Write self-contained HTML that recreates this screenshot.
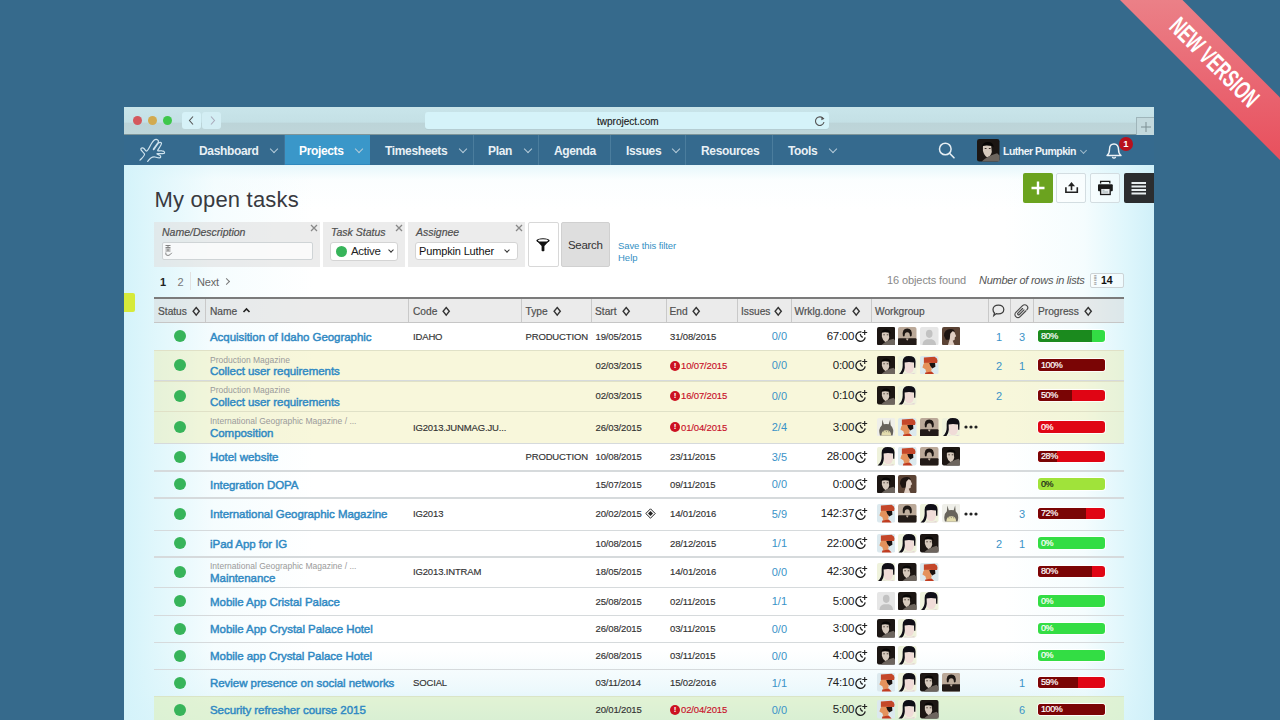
<!DOCTYPE html>
<html><head><meta charset="utf-8">
<style>
*{margin:0;padding:0;box-sizing:border-box}
html,body{width:1280px;height:720px;overflow:hidden}
body{background:#366a8c;font-family:"Liberation Sans",sans-serif;position:relative}
.a{position:absolute;white-space:nowrap}
.tl{width:9px;height:9px;border-radius:50%;top:116px}
.ni{color:#e8f0f5;font-weight:bold;font-size:12px;top:144px;line-height:14px;letter-spacing:-0.35px}
.sep{top:135px;width:1px;height:30px;background:#4b7d9d}
.chev{width:6px;height:6px;border-right:1.4px solid #b5cbd9;border-bottom:1.4px solid #b5cbd9;transform:rotate(45deg)}
.hd{font-size:10.2px;color:#505050;top:305.5px;line-height:12px;-webkit-text-stroke:0.2px #505050}
.hs{top:299px;width:1px;height:23px;background:#c9c9c9}
.sort{width:7px;height:10px}
.lnk{color:#2f89c3;font-size:11.5px;letter-spacing:-0.05px;line-height:13px;-webkit-text-stroke:0.45px #2f89c3}
.par{color:#9a9a9a;font-size:8.5px;line-height:10px}
.tx{color:#333;font-size:9.5px;line-height:11px;letter-spacing:-0.15px;-webkit-text-stroke-width:0.15px}
.num{color:#3a93c8;font-size:11px;line-height:12px}
.wk{color:#222;font-size:11.5px;line-height:13px;letter-spacing:-0.3px}
.dot{width:12px;height:12px;border-radius:50%;background:#37b45a;left:174px}
.bar{left:1038px;width:67px;height:11.5px;border-radius:3px;overflow:hidden;box-shadow:0 0 0 1px rgba(255,255,255,.85)}
.bar span{position:absolute;left:3px;top:0.5px;line-height:11px;font-size:9px;color:#fff;letter-spacing:-0.4px;-webkit-text-stroke:0.2px #fff}
.rb{left:154px;width:970px;height:1.5px;background:#d6dadc}
</style></head><body>

<div class="a" style="left:124px;top:107px;width:1030px;height:28px;background:linear-gradient(#c9e5ea 0,#c4e0e5 55%,#bcd4d8 56%,#bfd6da 100%)"></div>
<div class="a" style="left:124px;top:134px;width:1030px;height:1px;background:#7e9599"></div>
<div class="a tl" style="left:133px;background:#d4585d"></div>
<div class="a tl" style="left:148px;background:#d2aa4e"></div>
<div class="a tl" style="left:163px;background:#3ec74b"></div>
<div class="a" style="left:182px;top:112px;width:19px;height:17px;border-radius:3px;background:#d6f2f8"></div>
<div class="a" style="left:202px;top:112px;width:19px;height:17px;border-radius:3px;background:#d3eef4"></div>
<svg class="a" style="left:182px;top:112px" width="40" height="17"><path d="M11 4.5 L7.5 8.5 L11 12.5" stroke="#555" stroke-width="1.1" fill="none"/><path d="M29 4.5 L32.5 8.5 L29 12.5" stroke="#aab" stroke-width="1.1" fill="none"/></svg>
<div class="a" style="left:425px;top:112px;width:404px;height:17px;border-radius:3px;background:#d5f3f9;box-shadow:0 1px 0 #b5cdd2"></div>
<div class="a" style="left:597px;top:115.5px;font-size:10px;line-height:12px;color:#222;-webkit-text-stroke:0.15px #222">twproject.com</div>
<svg class="a" style="left:813px;top:114px" width="14" height="14"><path d="M10.5 5 A4.3 4.3 0 1 0 11 8" stroke="#555" stroke-width="1.1" fill="none"/><path d="M8.5 2.5 L11.5 4.8 L8.3 6.2Z" fill="#555"/></svg>
<div class="a" style="left:1136px;top:117px;width:18px;height:18px;background:#c3d9dd;border-left:1px solid #9fb5ba;border-top:1px solid #9fb5ba"></div>
<svg class="a" style="left:1139px;top:120px" width="14" height="14"><path d="M7 2 V12 M2 7 H12" stroke="#7d8f93" stroke-width="1"/></svg>
<div class="a" style="left:124px;top:135px;width:1030px;height:30px;background:#356a8e"></div>
<div class="a" style="left:284px;top:135px;width:86px;height:30px;background:#3a97c9;border-bottom:1px solid #2f88bd"></div>
<svg class="a" style="left:136px;top:136px" width="34" height="29" viewBox="0 0 34 29"><path d="M4 24.2 C6 22 9 19.5 8.5 18 C8 16.5 4.5 14.5 4.8 13 C5.2 11.5 7 11.5 8 12.5 C9 13.5 9.5 15.5 10.8 15 C12.5 14 14 10 15.5 7.5 C17 5 19.5 3 21 3.6 C22.5 4.2 22.8 5 22 6.5 L17.5 12.8 C17 14 18 14 19 12 L22.5 7 C23.5 6 25.5 6 25.5 7.5 C25.5 9 23 12 21.8 14 C21 15.5 24 14.5 26 14.8 C28 15 28.8 16 28.5 17 C28.2 18 24 17.5 21.5 17.5 C20 17.7 21.5 18.5 23 19 C24.5 19.5 25 20.5 24.5 21.5 C24 22.5 21 21.5 19 21 C16.5 20.5 14 22 11.7 25.4" stroke="#cfe3ee" stroke-width="1.2" fill="none" stroke-linecap="round" stroke-linejoin="round"/></svg>
<div class="a ni" style="left:199px;">Dashboard</div>
<div class="a chev" style="left:271px;top:146px"></div>
<div class="a ni" style="left:299px;color:#fff">Projects</div>
<div class="a chev" style="left:356px;top:146px"></div>
<div class="a ni" style="left:385px;">Timesheets</div>
<div class="a chev" style="left:460px;top:146px"></div>
<div class="a sep" style="left:473px"></div>
<div class="a ni" style="left:488px;">Plan</div>
<div class="a chev" style="left:525px;top:146px"></div>
<div class="a sep" style="left:538px"></div>
<div class="a ni" style="left:554px;">Agenda</div>
<div class="a sep" style="left:610px"></div>
<div class="a ni" style="left:626px;">Issues</div>
<div class="a chev" style="left:673px;top:146px"></div>
<div class="a sep" style="left:685px"></div>
<div class="a ni" style="left:701px;">Resources</div>
<div class="a sep" style="left:772px"></div>
<div class="a ni" style="left:788px;">Tools</div>
<div class="a chev" style="left:830px;top:146px"></div>
<div class="a sep" style="left:284px;background:#41759a"></div>
<svg class="a" style="left:937px;top:141px" width="20" height="20"><circle cx="8.3" cy="8" r="5.8" stroke="#e6eef3" stroke-width="1.5" fill="none"/><path d="M12.5 12.2 L17 16.8" stroke="#e6eef3" stroke-width="1.6" stroke-linecap="round"/></svg>
<svg class="a" style="left:977px;top:139px" width="22.5" height="22.5" viewBox="0 0 19 19"><rect width="19" height="19" rx="2" fill="#1c1613"/><path d="M4 7 Q5 2 10 2.5 Q14 3 14 7 L13 6 Q9 4.5 5.5 6Z" fill="#080605"/><path d="M5 6 Q8 4.8 12 6 L12.5 11 Q11.5 15 8.5 15.5 Q6 14 5 10Z" fill="#d6c9bc"/><path d="M6.5 8 L8 8 M10 8 L11.5 8" stroke="#3a2e28" stroke-width="0.9"/><path d="M4 19 Q9 14 17 12 L19 14 L19 19Z" fill="#6d655e"/></svg>
<div class="a" style="left:1003px;top:145px;font-size:11px;line-height:13px;font-weight:bold;color:#eef4f8;letter-spacing:-0.5px;font-size:10.5px">Luther Pumpkin</div>
<div class="a chev" style="left:1081px;top:148px;width:5px;height:5px;border-color:#9fb9ca;border-width:0 1.2px 1.2px 0"></div>
<svg class="a" style="left:1104px;top:141px" width="20" height="19"><path d="M3 14.5 Q5.5 12.5 5.5 8.5 Q5.5 3 10 3 Q14.5 3 14.5 8.5 Q14.5 12.5 17 14.5 Z" stroke="#eef4f8" stroke-width="1.4" fill="none" stroke-linejoin="round"/><path d="M8.3 16 Q10 18.3 11.7 16" stroke="#eef4f8" stroke-width="1.3" fill="none"/></svg>
<div class="a" style="left:1119px;top:137px;width:14px;height:14px;border-radius:50%;background:#b8101c;color:#fff;font-size:9.5px;font-weight:bold;text-align:center;line-height:14px">1</div>
<div class="a" style="left:124px;top:165px;width:1030px;height:555px;background:
 linear-gradient(90deg,rgba(212,243,250,1) 0,rgba(218,245,251,.85) 30px,rgba(235,250,253,.5) 90px,rgba(255,255,255,0) 190px),
 linear-gradient(270deg,rgba(208,240,249,1) 0,rgba(218,245,251,.85) 30px,rgba(235,250,253,.5) 70px,rgba(255,255,255,0) 150px),
 linear-gradient(180deg,rgba(210,240,248,.55) 0,rgba(240,251,253,.25) 15px,rgba(255,255,255,0) 45px),
 linear-gradient(0deg,rgba(205,238,248,.9) 0,rgba(225,245,250,.6) 30px,rgba(255,255,255,0) 70px),#fff"></div>
<div class="a" style="left:1023px;top:173px;width:30px;height:30px;border-radius:2px;background:#6ba31f"></div>
<svg class="a" style="left:1023px;top:173px" width="30" height="30"><path d="M15 8.5 V21.5 M8.5 15 H21.5" stroke="#fff" stroke-width="2.4"/></svg>
<div class="a" style="left:1056px;top:173px;width:30px;height:30px;border-radius:2px;background:rgba(255,255,255,.45);border:1px solid #d3dde1"></div>
<div class="a" style="left:1090px;top:173px;width:30px;height:30px;border-radius:2px;background:rgba(255,255,255,.45);border:1px solid #d3dde1"></div>
<svg class="a" style="left:1056px;top:173px" width="30" height="30"><path d="M15.5 9 L19 13.2 H12 Z" fill="#222"/><path d="M15.5 12.5 V17.2" stroke="#222" stroke-width="1.6"/><path d="M9.9 14.2 V19.2 H21.3 V14.2" stroke="#222" stroke-width="1.6" fill="none"/></svg>
<svg class="a" style="left:1090px;top:173px" width="30" height="30"><path d="M10.6 10.5 V8.4 H19.8 V10.5" stroke="#1a1a1a" stroke-width="1.3" fill="none"/><rect x="8" y="11.2" width="14.8" height="7" rx="1" fill="#1a1a1a"/><rect x="10.6" y="15.3" width="9.6" height="6.2" fill="#e8ecee" stroke="#1a1a1a" stroke-width="1.3"/><path d="M12.5 17.2 H14.5 M12.5 19 H18" stroke="#9aa" stroke-width="0.9"/></svg>
<div class="a" style="left:1124px;top:173px;width:30px;height:30px;border-radius:2px 0 0 2px;background:#2b2d2f"></div>
<svg class="a" style="left:1124px;top:173px" width="30" height="30"><path d="M7.5 10 H22 M7.5 13.5 H22 M7.5 17 H22 M7.5 20.5 H22" stroke="#e8eef0" stroke-width="2"/></svg>
<div class="a" style="left:154.5px;top:187px;font-size:22px;line-height:26px;color:#383a40;letter-spacing:0.2px">My open tasks</div>
<div class="a" style="left:154px;top:222px;width:166px;height:45px;background:rgba(225,225,225,.62)"></div>
<div class="a" style="left:162px;top:226px;font-size:10.5px;line-height:12px;font-style:italic;color:#505050;-webkit-text-stroke:0.2px #505050">Name/Description</div>
<svg class="a" style="left:309.5px;top:224px" width="8" height="8"><path d="M1 1 L7 7 M7 1 L1 7" stroke="#888" stroke-width="1.3"/></svg>
<div class="a" style="left:323px;top:222px;width:82px;height:45px;background:rgba(225,225,225,.62)"></div>
<div class="a" style="left:331px;top:226px;font-size:10.5px;line-height:12px;font-style:italic;color:#505050;-webkit-text-stroke:0.2px #505050">Task Status</div>
<svg class="a" style="left:394.5px;top:224px" width="8" height="8"><path d="M1 1 L7 7 M7 1 L1 7" stroke="#888" stroke-width="1.3"/></svg>
<div class="a" style="left:408px;top:222px;width:117px;height:45px;background:rgba(225,225,225,.62)"></div>
<div class="a" style="left:416px;top:226px;font-size:10.5px;line-height:12px;font-style:italic;color:#505050;-webkit-text-stroke:0.2px #505050">Assignee</div>
<svg class="a" style="left:514.5px;top:224px" width="8" height="8"><path d="M1 1 L7 7 M7 1 L1 7" stroke="#888" stroke-width="1.3"/></svg>
<div class="a" style="left:162px;top:241.5px;width:151px;height:18px;border-radius:2px;background:rgba(255,255,255,.72);border:1px solid #cfd4d6"></div>
<svg class="a" style="left:164px;top:244px" width="10" height="13"><path d="M1.5 1.5 H6.5 M4 1.5 V3.5 M1.5 3.5 H6.5 M1.5 5 H6.5 M4 5 V7 M1.5 7 H6.5 M1.8 8.5 Q1 11.5 4 11.5 Q6 11.5 7.8 8.8" stroke="#777" stroke-width="0.9" fill="none"/></svg>
<div class="a" style="left:330px;top:241.5px;width:68px;height:19px;border-radius:3px;background:#fff;border:1px solid #d4d4d4"></div>
<div class="a" style="left:336px;top:246px;width:11px;height:11px;border-radius:50%;background:#37b45a"></div>
<div class="a" style="left:351px;top:245px;font-size:11.5px;line-height:13px;color:#222;letter-spacing:-0.3px">Active</div>
<div class="a chev" style="left:389px;top:248px;width:4px;height:4px;border-color:#333;border-width:0 1.1px 1.1px 0"></div>
<div class="a" style="left:415px;top:241.5px;width:103px;height:18.5px;border-radius:3px;background:#fff;border:1px solid #d4d4d4"></div>
<div class="a" style="left:419px;top:244.5px;font-size:11px;line-height:13px;color:#111;letter-spacing:-0.15px">Pumpkin Luther</div>
<div class="a chev" style="left:505px;top:248px;width:4px;height:4px;border-color:#333;border-width:0 1.1px 1.1px 0"></div>
<div class="a" style="left:527.5px;top:222px;width:31px;height:45px;border-radius:2px;background:#fff;border:1px solid #d8d8d8"></div>
<svg class="a" style="left:535px;top:237px" width="16" height="16"><ellipse cx="8" cy="3.6" rx="6.6" ry="2.3" fill="#111"/><path d="M1.5 3.6 L6.6 9 V13.8 Q8 14.8 9.4 13.8 V9 L14.5 3.6Z" fill="#111"/><ellipse cx="8" cy="3.4" rx="5" ry="1.2" fill="#fff"/></svg>
<div class="a" style="left:561px;top:222px;width:49px;height:45px;border-radius:2px;background:#dedede;border:1px solid #d0d0d0"></div>
<div class="a" style="left:568px;top:239px;font-size:11.5px;line-height:13px;color:#333;letter-spacing:-0.3px">Search</div>
<div class="a" style="left:618px;top:240px;font-size:9.5px;line-height:11px;color:#3490c4;letter-spacing:-0.1px">Save this filter</div>
<div class="a" style="left:618px;top:252px;font-size:9.5px;line-height:11px;color:#3490c4">Help</div>
<div class="a" style="left:160px;top:276px;font-size:11px;line-height:12px;font-weight:bold;color:#222">1</div>
<div class="a" style="left:177.5px;top:276px;font-size:11px;line-height:12px;color:#777">2</div>
<div class="a" style="left:190px;top:272px;width:1px;height:18px;background:#e2e2e2"></div>
<div class="a" style="left:197px;top:276px;font-size:11px;line-height:12px;color:#666;letter-spacing:-0.2px">Next</div>
<div class="a chev" style="left:224px;top:279px;width:5px;height:5px;border-color:#777;border-style:solid;border-width:1.2px 1.2px 0 0"></div>
<div class="a" style="left:124px;top:293px;width:11px;height:19px;border-radius:0 2px 2px 0;background:#d6ea3a"></div>
<div class="a" style="left:887px;top:274px;font-size:11px;line-height:13px;color:#888;letter-spacing:-0.1px">16 objects found</div>
<div class="a" style="left:979px;top:274px;font-size:11px;line-height:13px;color:#555;font-style:italic;letter-spacing:-0.25px">Number of rows in lists</div>
<div class="a" style="left:1089.5px;top:272.5px;width:34px;height:15px;border-radius:2px;background:rgba(255,255,255,.5);border:1px solid #ccd3d6"></div>
<div class="a" style="left:1094px;top:274.5px;font-size:5px;line-height:3.5px;color:#777;width:4px">&#8801;<br>&#8801;<br>&#8801;</div>
<div class="a" style="left:1101px;top:274px;font-size:10.5px;line-height:12px;font-weight:bold;color:#111">14</div>
<div class="a" style="left:154px;top:297px;width:970px;height:2px;background:#7b7b7b"></div>
<div class="a" style="left:154px;top:299px;width:970px;height:23px;background:rgba(215,215,215,.5)"></div>
<div class="a" style="left:154px;top:321.5px;width:970px;height:1.2px;background:#c6c6c6"></div>
<div class="a hs" style="left:205px"></div>
<div class="a hs" style="left:408px"></div>
<div class="a hs" style="left:521px"></div>
<div class="a hs" style="left:591px"></div>
<div class="a hs" style="left:665.5px"></div>
<div class="a hs" style="left:737px"></div>
<div class="a hs" style="left:790.5px"></div>
<div class="a hs" style="left:871px"></div>
<div class="a hs" style="left:988px"></div>
<div class="a hs" style="left:1010px"></div>
<div class="a hs" style="left:1033px"></div>
<div class="a hd" style="left:158px">Status</div>
<svg class="a" style="left:191.5px;top:305.7px" width="9" height="11"><path d="M4.2 1.5 L7.3 5.3 L4.2 9.1 L1.1 5.3Z" stroke="#333" stroke-width="1.4" fill="none" stroke-linejoin="miter"/></svg>
<div class="a hd" style="left:210px">Name</div>
<div class="a hd" style="left:413px">Code</div>
<svg class="a" style="left:441.5px;top:305.7px" width="9" height="11"><path d="M4.2 1.5 L7.3 5.3 L4.2 9.1 L1.1 5.3Z" stroke="#333" stroke-width="1.4" fill="none" stroke-linejoin="miter"/></svg>
<div class="a hd" style="left:525.5px">Type</div>
<svg class="a" style="left:552.5px;top:305.7px" width="9" height="11"><path d="M4.2 1.5 L7.3 5.3 L4.2 9.1 L1.1 5.3Z" stroke="#333" stroke-width="1.4" fill="none" stroke-linejoin="miter"/></svg>
<div class="a hd" style="left:595px">Start</div>
<svg class="a" style="left:622px;top:305.7px" width="9" height="11"><path d="M4.2 1.5 L7.3 5.3 L4.2 9.1 L1.1 5.3Z" stroke="#333" stroke-width="1.4" fill="none" stroke-linejoin="miter"/></svg>
<div class="a hd" style="left:669.5px">End</div>
<svg class="a" style="left:692px;top:305.7px" width="9" height="11"><path d="M4.2 1.5 L7.3 5.3 L4.2 9.1 L1.1 5.3Z" stroke="#333" stroke-width="1.4" fill="none" stroke-linejoin="miter"/></svg>
<div class="a hd" style="left:741px">Issues</div>
<svg class="a" style="left:774px;top:305.7px" width="9" height="11"><path d="M4.2 1.5 L7.3 5.3 L4.2 9.1 L1.1 5.3Z" stroke="#333" stroke-width="1.4" fill="none" stroke-linejoin="miter"/></svg>
<div class="a hd" style="left:794.5px">Wrklg.done</div>
<svg class="a" style="left:852px;top:305.7px" width="9" height="11"><path d="M4.2 1.5 L7.3 5.3 L4.2 9.1 L1.1 5.3Z" stroke="#333" stroke-width="1.4" fill="none" stroke-linejoin="miter"/></svg>
<div class="a hd" style="left:875px">Workgroup</div>
<div class="a hd" style="left:1038px">Progress</div>
<svg class="a" style="left:1083.5px;top:305.7px" width="9" height="11"><path d="M4.2 1.5 L7.3 5.3 L4.2 9.1 L1.1 5.3Z" stroke="#333" stroke-width="1.4" fill="none" stroke-linejoin="miter"/></svg>
<svg class="a" style="left:242px;top:306px" width="9" height="8"><path d="M1.5 6 L4.5 3 L7.5 6" stroke="#222" stroke-width="1.6" fill="none"/></svg>
<svg class="a" style="left:988px;top:300px" width="22" height="22"><path d="M10.4 5.1 C13.5 5.1 15.8 6.9 15.8 9.5 C15.8 12.1 13.5 13.9 10.4 13.9 C9.6 13.9 8.9 13.8 8.3 13.6 L5.8 15.6 L6.5 12.9 C5.5 12.1 5 10.9 5 9.5 C5 6.9 7.3 5.1 10.4 5.1Z" stroke="#3d3d3d" stroke-width="1.25" fill="none"/></svg>
<svg class="a" style="left:1011px;top:300px" width="22" height="22"><g transform="rotate(45 10.5 11)"><path d="M13.5 8 L13.5 16 A3 3 0 0 1 7.5 16 L7.5 6.5 A3 3 0 0 1 13.5 6.5 M11.5 8.5 L11.5 15 A1 1 0 0 1 9.5 15 L9.5 8.5" stroke="#4a4a4a" stroke-width="1.2" fill="none" stroke-linecap="round"/></g></svg>
<div class="a dot" style="top:330.0px"></div>
<div class="a lnk" style="left:210px;top:330.6px">Acquisition of Idaho Geographic</div>
<div class="a tx" style="left:413px;top:330.5px">IDAHO</div>
<div class="a tx" style="left:525.5px;top:330.5px">PRODUCTION</div>
<div class="a tx" style="left:595.5px;top:330.5px">19/05/2015</div>
<div class="a tx" style="left:670px;top:330.5px">31/08/2015</div>
<div class="a num" style="right:493px;top:330.0px">0/0</div>
<div class="a wk" style="right:426px;top:329.5px">67:00</div>
<svg class="a" style="left:854px;top:328.0px" width="16" height="16"><path d="M7.4 4 A4.7 4.7 0 1 0 11.2 9.4" stroke="#222" stroke-width="1.3" fill="none"/><path d="M6.2 6 Q6.8 8.6 8.8 9.4" stroke="#222" stroke-width="1.2" fill="none"/><path d="M10.7 2 V7 M8.2 4.5 H13.2" stroke="#222" stroke-width="1.1"/></svg>
<svg class="a" style="left:876.5px;top:326.7px" width="18.5" height="18.5" viewBox="0 0 19 19"><rect width="19" height="19" rx="2" fill="#1c1613"/><path d="M4 7 Q5 2 10 2.5 Q14 3 14 7 L13 6 Q9 4.5 5.5 6Z" fill="#080605"/><path d="M5 6 Q8 4.8 12 6 L12.5 11 Q11.5 15 8.5 15.5 Q6 14 5 10Z" fill="#d6c9bc"/><path d="M6.5 8 L8 8 M10 8 L11.5 8" stroke="#3a2e28" stroke-width="0.9"/><path d="M4 19 Q9 14 17 12 L19 14 L19 19Z" fill="#6d655e"/></svg>
<svg class="a" style="left:898.3px;top:326.7px" width="18.5" height="18.5" viewBox="0 0 19 19"><rect width="19" height="19" rx="2" fill="#bba999"/><rect y="11.5" width="19" height="7.5" rx="1" fill="#221a17"/><path d="M5 9 Q4 1.5 9.5 1.5 Q15 1.5 14 9 Q13 10.5 12 9 L7 9 Q6 10.5 5 9Z" fill="#1e1714"/><ellipse cx="9.5" cy="8.6" rx="2.6" ry="3.2" fill="#bfae9e"/><path d="M8 12 L9.5 14 L11 12Z" fill="#c4b2a2"/></svg>
<svg class="a" style="left:920.0999999999999px;top:326.7px" width="18.5" height="18.5" viewBox="0 0 19 19"><rect width="19" height="19" rx="2" fill="#e6e6e6"/><ellipse cx="9.5" cy="7" rx="3.4" ry="4.2" fill="#c2c2c2"/><path d="M2.5 19 Q2.5 13.5 7 12.5 L12 12.5 Q16.5 13.5 16.5 19Z" fill="#c2c2c2"/></svg>
<svg class="a" style="left:941.8999999999999px;top:326.7px" width="18.5" height="18.5" viewBox="0 0 19 19"><rect width="19" height="19" rx="2" fill="#5b4335"/><path d="M2 9 Q2 2 9 2 Q13 2 13 5 L9 7 L8 13 L4 13Z" fill="#1d1411"/><path d="M10.5 4.5 Q13 4 13.5 7 L14.5 9.5 L13.2 10.5 L13 13 L11 14 L13 19 L6 19 L8 12 L8.5 7Z" fill="#e0cfc4"/></svg>
<div class="a num" style="left:996px;top:330.6px">1</div>
<div class="a num" style="left:1019px;top:330.6px">3</div>
<div class="a bar" style="top:330.0px;background:#33dd44"><div class="a" style="left:0;top:0;height:11.5px;width:80%;background:#1b8a1e"></div><span>80%</span></div>
<div class="a rb" style="top:349.5px"></div>
<div class="a" style="left:154px;top:350px;width:970px;height:30.5px;background:rgba(238,236,170,.42)"></div>
<div class="a dot" style="top:359.2px"></div>
<div class="a par" style="left:210px;top:354.6px">Production Magazine</div>
<div class="a lnk" style="left:210px;top:365.1px">Collect user requirements</div>
<div class="a tx" style="left:595.5px;top:359.8px">02/03/2015</div>
<div class="a" style="left:670px;top:360.6px;width:10px;height:10px;border-radius:50%;background:#cc1122;color:#fff;font-size:8px;font-weight:bold;line-height:10px;text-align:center">!</div>
<div class="a tx" style="left:681px;top:359.8px;color:#c8102a">10/07/2015</div>
<div class="a num" style="right:493px;top:359.2px">0/0</div>
<div class="a wk" style="right:426px;top:358.8px">0:00</div>
<svg class="a" style="left:854px;top:357.2px" width="16" height="16"><path d="M7.4 4 A4.7 4.7 0 1 0 11.2 9.4" stroke="#222" stroke-width="1.3" fill="none"/><path d="M6.2 6 Q6.8 8.6 8.8 9.4" stroke="#222" stroke-width="1.2" fill="none"/><path d="M10.7 2 V7 M8.2 4.5 H13.2" stroke="#222" stroke-width="1.1"/></svg>
<svg class="a" style="left:876.5px;top:355.9px" width="18.5" height="18.5" viewBox="0 0 19 19"><rect width="19" height="19" rx="2" fill="#1c1613"/><path d="M4 7 Q5 2 10 2.5 Q14 3 14 7 L13 6 Q9 4.5 5.5 6Z" fill="#080605"/><path d="M5 6 Q8 4.8 12 6 L12.5 11 Q11.5 15 8.5 15.5 Q6 14 5 10Z" fill="#d6c9bc"/><path d="M6.5 8 L8 8 M10 8 L11.5 8" stroke="#3a2e28" stroke-width="0.9"/><path d="M4 19 Q9 14 17 12 L19 14 L19 19Z" fill="#6d655e"/></svg>
<svg class="a" style="left:898.3px;top:355.9px" width="18.5" height="18.5" viewBox="0 0 19 19"><rect width="19" height="19" rx="2" fill="#eff2dc"/><ellipse cx="11.5" cy="11.2" rx="5" ry="6.6" fill="#f0dcd8"/><path d="M4.8 6 Q4.8 0 11 0 Q18 0 18 5.5 L17.8 12 L16.6 12 L16.4 6.8 Q11 5.6 6.8 6.8 L7 12 Q6.5 17 4 19 L0.5 19 Q4.8 15.5 4.8 10Z" fill="#100e16"/><path d="M7 17.8 Q11.5 19.5 17 17.3 L17 19 L6 19Z" fill="#e2d4d6"/></svg>
<svg class="a" style="left:920.0999999999999px;top:355.9px" width="18.5" height="18.5" viewBox="0 0 19 19"><rect width="19" height="19" rx="2" fill="#dce9ee"/><path d="M4 1.5 L15 0.8 Q18.2 2.5 18 5 L17.5 7.2 L4 7.2Z" fill="#c4472a"/><path d="M3.5 8.5 L4.5 7 L11 7 L12 14 L10.5 17 L6.5 17 L5.5 13.5 L2.5 11.8Z" fill="#e4925c"/><path d="M9.5 7.2 L15.5 7.2 L15.8 11 L12.5 12.8 L10.5 10Z" fill="#1a1210"/><path d="M5.5 17 L12 16 L15 19 L5 19Z" fill="#c13c20"/></svg>
<div class="a num" style="left:996px;top:359.9px">2</div>
<div class="a num" style="left:1019px;top:359.9px">1</div>
<div class="a bar" style="top:359.2px;background:#e00514"><div class="a" style="left:0;top:0;height:11.5px;width:100%;background:#7a0505"></div><span>100%</span></div>
<div class="a rb" style="top:380.0px"></div>
<div class="a" style="left:154px;top:380.5px;width:970px;height:30.5px;background:rgba(238,236,170,.42)"></div>
<div class="a dot" style="top:389.8px"></div>
<div class="a par" style="left:210px;top:385.1px">Production Magazine</div>
<div class="a lnk" style="left:210px;top:395.6px">Collect user requirements</div>
<div class="a tx" style="left:595.5px;top:390.2px">02/03/2015</div>
<div class="a" style="left:670px;top:391.1px;width:10px;height:10px;border-radius:50%;background:#cc1122;color:#fff;font-size:8px;font-weight:bold;line-height:10px;text-align:center">!</div>
<div class="a tx" style="left:681px;top:390.2px;color:#c8102a">16/07/2015</div>
<div class="a num" style="right:493px;top:389.8px">0/0</div>
<div class="a wk" style="right:426px;top:389.2px">0:10</div>
<svg class="a" style="left:854px;top:387.8px" width="16" height="16"><path d="M7.4 4 A4.7 4.7 0 1 0 11.2 9.4" stroke="#222" stroke-width="1.3" fill="none"/><path d="M6.2 6 Q6.8 8.6 8.8 9.4" stroke="#222" stroke-width="1.2" fill="none"/><path d="M10.7 2 V7 M8.2 4.5 H13.2" stroke="#222" stroke-width="1.1"/></svg>
<svg class="a" style="left:876.5px;top:386.4px" width="18.5" height="18.5" viewBox="0 0 19 19"><rect width="19" height="19" rx="2" fill="#1c1613"/><path d="M4 7 Q5 2 10 2.5 Q14 3 14 7 L13 6 Q9 4.5 5.5 6Z" fill="#080605"/><path d="M5 6 Q8 4.8 12 6 L12.5 11 Q11.5 15 8.5 15.5 Q6 14 5 10Z" fill="#d6c9bc"/><path d="M6.5 8 L8 8 M10 8 L11.5 8" stroke="#3a2e28" stroke-width="0.9"/><path d="M4 19 Q9 14 17 12 L19 14 L19 19Z" fill="#6d655e"/></svg>
<svg class="a" style="left:898.3px;top:386.4px" width="18.5" height="18.5" viewBox="0 0 19 19"><rect width="19" height="19" rx="2" fill="#eff2dc"/><ellipse cx="11.5" cy="11.2" rx="5" ry="6.6" fill="#f0dcd8"/><path d="M4.8 6 Q4.8 0 11 0 Q18 0 18 5.5 L17.8 12 L16.6 12 L16.4 6.8 Q11 5.6 6.8 6.8 L7 12 Q6.5 17 4 19 L0.5 19 Q4.8 15.5 4.8 10Z" fill="#100e16"/><path d="M7 17.8 Q11.5 19.5 17 17.3 L17 19 L6 19Z" fill="#e2d4d6"/></svg>
<div class="a num" style="left:996px;top:390.4px">2</div>
<div class="a bar" style="top:389.8px;background:#e00514"><div class="a" style="left:0;top:0;height:11.5px;width:50%;background:#7a0505"></div><span>50%</span></div>
<div class="a rb" style="top:410.5px"></div>
<div class="a" style="left:154px;top:411px;width:970px;height:32px;background:rgba(238,236,170,.42)"></div>
<div class="a dot" style="top:421.0px"></div>
<div class="a par" style="left:210px;top:416.3px">International Geographic Magazine / ...</div>
<div class="a lnk" style="left:210px;top:426.8px">Composition</div>
<div class="a tx" style="left:413px;top:421.5px">IG2013.JUNMAG.JU...</div>
<div class="a tx" style="left:595.5px;top:421.5px">26/03/2015</div>
<div class="a" style="left:670px;top:422.3px;width:10px;height:10px;border-radius:50%;background:#cc1122;color:#fff;font-size:8px;font-weight:bold;line-height:10px;text-align:center">!</div>
<div class="a tx" style="left:681px;top:421.5px;color:#c8102a">01/04/2015</div>
<div class="a num" style="right:493px;top:421.0px">2/4</div>
<div class="a wk" style="right:426px;top:420.5px">3:00</div>
<svg class="a" style="left:854px;top:419.0px" width="16" height="16"><path d="M7.4 4 A4.7 4.7 0 1 0 11.2 9.4" stroke="#222" stroke-width="1.3" fill="none"/><path d="M6.2 6 Q6.8 8.6 8.8 9.4" stroke="#222" stroke-width="1.2" fill="none"/><path d="M10.7 2 V7 M8.2 4.5 H13.2" stroke="#222" stroke-width="1.1"/></svg>
<svg class="a" style="left:876.5px;top:417.7px" width="18.5" height="18.5" viewBox="0 0 19 19"><rect width="19" height="19" rx="2" fill="#efefe9"/><path d="M3 18 Q1 11 5 7.5 L5.5 1.5 L7 6.5 Q9.5 5.8 12 6.5 L13.5 1.5 L14 7.5 Q18 11 16 18Z" fill="#67635b"/><path d="M4.5 18 Q4.5 12.5 9.5 12.5 Q14.5 12.5 14.5 18Z" fill="#e3dcad"/><path d="M6.5 14 L7.5 14.5 M9 13.6 L10 14.1 M11.5 14 L12.5 14.5" stroke="#67635b" stroke-width="0.8"/></svg>
<svg class="a" style="left:898.3px;top:417.7px" width="18.5" height="18.5" viewBox="0 0 19 19"><rect width="19" height="19" rx="2" fill="#dce9ee"/><path d="M4 1.5 L15 0.8 Q18.2 2.5 18 5 L17.5 7.2 L4 7.2Z" fill="#c4472a"/><path d="M3.5 8.5 L4.5 7 L11 7 L12 14 L10.5 17 L6.5 17 L5.5 13.5 L2.5 11.8Z" fill="#e4925c"/><path d="M9.5 7.2 L15.5 7.2 L15.8 11 L12.5 12.8 L10.5 10Z" fill="#1a1210"/><path d="M5.5 17 L12 16 L15 19 L5 19Z" fill="#c13c20"/></svg>
<svg class="a" style="left:920.0999999999999px;top:417.7px" width="18.5" height="18.5" viewBox="0 0 19 19"><rect width="19" height="19" rx="2" fill="#bba999"/><rect y="11.5" width="19" height="7.5" rx="1" fill="#221a17"/><path d="M5 9 Q4 1.5 9.5 1.5 Q15 1.5 14 9 Q13 10.5 12 9 L7 9 Q6 10.5 5 9Z" fill="#1e1714"/><ellipse cx="9.5" cy="8.6" rx="2.6" ry="3.2" fill="#bfae9e"/><path d="M8 12 L9.5 14 L11 12Z" fill="#c4b2a2"/></svg>
<svg class="a" style="left:941.8999999999999px;top:417.7px" width="18.5" height="18.5" viewBox="0 0 19 19"><rect width="19" height="19" rx="2" fill="#eff2dc"/><ellipse cx="11.5" cy="11.2" rx="5" ry="6.6" fill="#f0dcd8"/><path d="M4.8 6 Q4.8 0 11 0 Q18 0 18 5.5 L17.8 12 L16.6 12 L16.4 6.8 Q11 5.6 6.8 6.8 L7 12 Q6.5 17 4 19 L0.5 19 Q4.8 15.5 4.8 10Z" fill="#100e16"/><path d="M7 17.8 Q11.5 19.5 17 17.3 L17 19 L6 19Z" fill="#e2d4d6"/></svg>
<svg class="a" style="left:964.1999999999998px;top:425.0px" width="14" height="4"><circle cx="2" cy="2" r="1.6" fill="#222"/><circle cx="7" cy="2" r="1.6" fill="#222"/><circle cx="12" cy="2" r="1.6" fill="#222"/></svg>
<div class="a bar" style="top:421.0px;background:#e00514"><div class="a" style="left:0;top:0;height:11.5px;width:0%;background:#7a0505"></div><span>0%</span></div>
<div class="a rb" style="top:442.5px"></div>
<div class="a dot" style="top:450.8px"></div>
<div class="a lnk" style="left:210px;top:451.4px">Hotel website</div>
<div class="a tx" style="left:525.5px;top:451.2px">PRODUCTION</div>
<div class="a tx" style="left:595.5px;top:451.2px">10/08/2015</div>
<div class="a tx" style="left:670px;top:451.2px">23/11/2015</div>
<div class="a num" style="right:493px;top:450.8px">3/5</div>
<div class="a wk" style="right:426px;top:450.2px">28:00</div>
<svg class="a" style="left:854px;top:448.8px" width="16" height="16"><path d="M7.4 4 A4.7 4.7 0 1 0 11.2 9.4" stroke="#222" stroke-width="1.3" fill="none"/><path d="M6.2 6 Q6.8 8.6 8.8 9.4" stroke="#222" stroke-width="1.2" fill="none"/><path d="M10.7 2 V7 M8.2 4.5 H13.2" stroke="#222" stroke-width="1.1"/></svg>
<svg class="a" style="left:876.5px;top:447.4px" width="18.5" height="18.5" viewBox="0 0 19 19"><rect width="19" height="19" rx="2" fill="#eff2dc"/><ellipse cx="11.5" cy="11.2" rx="5" ry="6.6" fill="#f0dcd8"/><path d="M4.8 6 Q4.8 0 11 0 Q18 0 18 5.5 L17.8 12 L16.6 12 L16.4 6.8 Q11 5.6 6.8 6.8 L7 12 Q6.5 17 4 19 L0.5 19 Q4.8 15.5 4.8 10Z" fill="#100e16"/><path d="M7 17.8 Q11.5 19.5 17 17.3 L17 19 L6 19Z" fill="#e2d4d6"/></svg>
<svg class="a" style="left:898.3px;top:447.4px" width="18.5" height="18.5" viewBox="0 0 19 19"><rect width="19" height="19" rx="2" fill="#dce9ee"/><path d="M4 1.5 L15 0.8 Q18.2 2.5 18 5 L17.5 7.2 L4 7.2Z" fill="#c4472a"/><path d="M3.5 8.5 L4.5 7 L11 7 L12 14 L10.5 17 L6.5 17 L5.5 13.5 L2.5 11.8Z" fill="#e4925c"/><path d="M9.5 7.2 L15.5 7.2 L15.8 11 L12.5 12.8 L10.5 10Z" fill="#1a1210"/><path d="M5.5 17 L12 16 L15 19 L5 19Z" fill="#c13c20"/></svg>
<svg class="a" style="left:920.0999999999999px;top:447.4px" width="18.5" height="18.5" viewBox="0 0 19 19"><rect width="19" height="19" rx="2" fill="#bba999"/><rect y="11.5" width="19" height="7.5" rx="1" fill="#221a17"/><path d="M5 9 Q4 1.5 9.5 1.5 Q15 1.5 14 9 Q13 10.5 12 9 L7 9 Q6 10.5 5 9Z" fill="#1e1714"/><ellipse cx="9.5" cy="8.6" rx="2.6" ry="3.2" fill="#bfae9e"/><path d="M8 12 L9.5 14 L11 12Z" fill="#c4b2a2"/></svg>
<svg class="a" style="left:941.8999999999999px;top:447.4px" width="18.5" height="18.5" viewBox="0 0 19 19"><rect width="19" height="19" rx="2" fill="#1c1613"/><path d="M4 7 Q5 2 10 2.5 Q14 3 14 7 L13 6 Q9 4.5 5.5 6Z" fill="#080605"/><path d="M5 6 Q8 4.8 12 6 L12.5 11 Q11.5 15 8.5 15.5 Q6 14 5 10Z" fill="#d6c9bc"/><path d="M6.5 8 L8 8 M10 8 L11.5 8" stroke="#3a2e28" stroke-width="0.9"/><path d="M4 19 Q9 14 17 12 L19 14 L19 19Z" fill="#6d655e"/></svg>
<div class="a bar" style="top:450.8px;background:#e00514"><div class="a" style="left:0;top:0;height:11.5px;width:28%;background:#7a0505"></div><span>28%</span></div>
<div class="a rb" style="top:470.0px"></div>
<div class="a dot" style="top:478.0px"></div>
<div class="a lnk" style="left:210px;top:478.6px">Integration DOPA</div>
<div class="a tx" style="left:595.5px;top:478.5px">15/07/2015</div>
<div class="a tx" style="left:670px;top:478.5px">09/11/2015</div>
<div class="a num" style="right:493px;top:478.0px">0/0</div>
<div class="a wk" style="right:426px;top:477.5px">0:00</div>
<svg class="a" style="left:854px;top:476.0px" width="16" height="16"><path d="M7.4 4 A4.7 4.7 0 1 0 11.2 9.4" stroke="#222" stroke-width="1.3" fill="none"/><path d="M6.2 6 Q6.8 8.6 8.8 9.4" stroke="#222" stroke-width="1.2" fill="none"/><path d="M10.7 2 V7 M8.2 4.5 H13.2" stroke="#222" stroke-width="1.1"/></svg>
<svg class="a" style="left:876.5px;top:474.7px" width="18.5" height="18.5" viewBox="0 0 19 19"><rect width="19" height="19" rx="2" fill="#1c1613"/><path d="M4 7 Q5 2 10 2.5 Q14 3 14 7 L13 6 Q9 4.5 5.5 6Z" fill="#080605"/><path d="M5 6 Q8 4.8 12 6 L12.5 11 Q11.5 15 8.5 15.5 Q6 14 5 10Z" fill="#d6c9bc"/><path d="M6.5 8 L8 8 M10 8 L11.5 8" stroke="#3a2e28" stroke-width="0.9"/><path d="M4 19 Q9 14 17 12 L19 14 L19 19Z" fill="#6d655e"/></svg>
<svg class="a" style="left:898.3px;top:474.7px" width="18.5" height="18.5" viewBox="0 0 19 19"><rect width="19" height="19" rx="2" fill="#5b4335"/><path d="M2 9 Q2 2 9 2 Q13 2 13 5 L9 7 L8 13 L4 13Z" fill="#1d1411"/><path d="M10.5 4.5 Q13 4 13.5 7 L14.5 9.5 L13.2 10.5 L13 13 L11 14 L13 19 L6 19 L8 12 L8.5 7Z" fill="#e0cfc4"/></svg>
<div class="a bar" style="top:478.0px;background:#a0e33a"><div class="a" style="left:0;top:0;height:11.5px;width:0%;background:#5f9a10"></div><span style="color:#1a1a1a;-webkit-text-stroke-color:#1a1a1a">0%</span></div>
<div class="a rb" style="top:497.0px"></div>
<div class="a dot" style="top:507.8px"></div>
<div class="a lnk" style="left:210px;top:508.4px">International Geographic Magazine</div>
<div class="a tx" style="left:413px;top:508.2px">IG2013</div>
<div class="a tx" style="left:595.5px;top:508.2px">20/02/2015</div>
<svg class="a" style="left:645px;top:508.2px" width="11" height="11"><path d="M5.5 0.8 L10.2 5.5 L5.5 10.2 L0.8 5.5Z" stroke="#222" stroke-width="1" fill="none"/><path d="M5.5 3 L8 5.5 L5.5 8 L3 5.5Z" fill="#222"/></svg>
<div class="a tx" style="left:670px;top:508.2px">14/01/2016</div>
<div class="a num" style="right:493px;top:507.8px">5/9</div>
<div class="a wk" style="right:426px;top:507.2px">142:37</div>
<svg class="a" style="left:854px;top:505.8px" width="16" height="16"><path d="M7.4 4 A4.7 4.7 0 1 0 11.2 9.4" stroke="#222" stroke-width="1.3" fill="none"/><path d="M6.2 6 Q6.8 8.6 8.8 9.4" stroke="#222" stroke-width="1.2" fill="none"/><path d="M10.7 2 V7 M8.2 4.5 H13.2" stroke="#222" stroke-width="1.1"/></svg>
<svg class="a" style="left:876.5px;top:504.4px" width="18.5" height="18.5" viewBox="0 0 19 19"><rect width="19" height="19" rx="2" fill="#dce9ee"/><path d="M4 1.5 L15 0.8 Q18.2 2.5 18 5 L17.5 7.2 L4 7.2Z" fill="#c4472a"/><path d="M3.5 8.5 L4.5 7 L11 7 L12 14 L10.5 17 L6.5 17 L5.5 13.5 L2.5 11.8Z" fill="#e4925c"/><path d="M9.5 7.2 L15.5 7.2 L15.8 11 L12.5 12.8 L10.5 10Z" fill="#1a1210"/><path d="M5.5 17 L12 16 L15 19 L5 19Z" fill="#c13c20"/></svg>
<svg class="a" style="left:898.3px;top:504.4px" width="18.5" height="18.5" viewBox="0 0 19 19"><rect width="19" height="19" rx="2" fill="#bba999"/><rect y="11.5" width="19" height="7.5" rx="1" fill="#221a17"/><path d="M5 9 Q4 1.5 9.5 1.5 Q15 1.5 14 9 Q13 10.5 12 9 L7 9 Q6 10.5 5 9Z" fill="#1e1714"/><ellipse cx="9.5" cy="8.6" rx="2.6" ry="3.2" fill="#bfae9e"/><path d="M8 12 L9.5 14 L11 12Z" fill="#c4b2a2"/></svg>
<svg class="a" style="left:920.0999999999999px;top:504.4px" width="18.5" height="18.5" viewBox="0 0 19 19"><rect width="19" height="19" rx="2" fill="#eff2dc"/><ellipse cx="11.5" cy="11.2" rx="5" ry="6.6" fill="#f0dcd8"/><path d="M4.8 6 Q4.8 0 11 0 Q18 0 18 5.5 L17.8 12 L16.6 12 L16.4 6.8 Q11 5.6 6.8 6.8 L7 12 Q6.5 17 4 19 L0.5 19 Q4.8 15.5 4.8 10Z" fill="#100e16"/><path d="M7 17.8 Q11.5 19.5 17 17.3 L17 19 L6 19Z" fill="#e2d4d6"/></svg>
<svg class="a" style="left:941.8999999999999px;top:504.4px" width="18.5" height="18.5" viewBox="0 0 19 19"><rect width="19" height="19" rx="2" fill="#efefe9"/><path d="M3 18 Q1 11 5 7.5 L5.5 1.5 L7 6.5 Q9.5 5.8 12 6.5 L13.5 1.5 L14 7.5 Q18 11 16 18Z" fill="#67635b"/><path d="M4.5 18 Q4.5 12.5 9.5 12.5 Q14.5 12.5 14.5 18Z" fill="#e3dcad"/><path d="M6.5 14 L7.5 14.5 M9 13.6 L10 14.1 M11.5 14 L12.5 14.5" stroke="#67635b" stroke-width="0.8"/></svg>
<svg class="a" style="left:964.1999999999998px;top:511.8px" width="14" height="4"><circle cx="2" cy="2" r="1.6" fill="#222"/><circle cx="7" cy="2" r="1.6" fill="#222"/><circle cx="12" cy="2" r="1.6" fill="#222"/></svg>
<div class="a num" style="left:1019px;top:508.4px">3</div>
<div class="a bar" style="top:507.8px;background:#e00514"><div class="a" style="left:0;top:0;height:11.5px;width:72%;background:#7a0505"></div><span>72%</span></div>
<div class="a rb" style="top:529.5px"></div>
<div class="a dot" style="top:537.2px"></div>
<div class="a lnk" style="left:210px;top:537.9px">iPad App for IG</div>
<div class="a tx" style="left:595.5px;top:537.8px">10/08/2015</div>
<div class="a tx" style="left:670px;top:537.8px">28/12/2015</div>
<div class="a num" style="right:493px;top:537.2px">1/1</div>
<div class="a wk" style="right:426px;top:536.8px">22:00</div>
<svg class="a" style="left:854px;top:535.2px" width="16" height="16"><path d="M7.4 4 A4.7 4.7 0 1 0 11.2 9.4" stroke="#222" stroke-width="1.3" fill="none"/><path d="M6.2 6 Q6.8 8.6 8.8 9.4" stroke="#222" stroke-width="1.2" fill="none"/><path d="M10.7 2 V7 M8.2 4.5 H13.2" stroke="#222" stroke-width="1.1"/></svg>
<svg class="a" style="left:876.5px;top:534.0px" width="18.5" height="18.5" viewBox="0 0 19 19"><rect width="19" height="19" rx="2" fill="#dce9ee"/><path d="M4 1.5 L15 0.8 Q18.2 2.5 18 5 L17.5 7.2 L4 7.2Z" fill="#c4472a"/><path d="M3.5 8.5 L4.5 7 L11 7 L12 14 L10.5 17 L6.5 17 L5.5 13.5 L2.5 11.8Z" fill="#e4925c"/><path d="M9.5 7.2 L15.5 7.2 L15.8 11 L12.5 12.8 L10.5 10Z" fill="#1a1210"/><path d="M5.5 17 L12 16 L15 19 L5 19Z" fill="#c13c20"/></svg>
<svg class="a" style="left:898.3px;top:534.0px" width="18.5" height="18.5" viewBox="0 0 19 19"><rect width="19" height="19" rx="2" fill="#eff2dc"/><ellipse cx="11.5" cy="11.2" rx="5" ry="6.6" fill="#f0dcd8"/><path d="M4.8 6 Q4.8 0 11 0 Q18 0 18 5.5 L17.8 12 L16.6 12 L16.4 6.8 Q11 5.6 6.8 6.8 L7 12 Q6.5 17 4 19 L0.5 19 Q4.8 15.5 4.8 10Z" fill="#100e16"/><path d="M7 17.8 Q11.5 19.5 17 17.3 L17 19 L6 19Z" fill="#e2d4d6"/></svg>
<svg class="a" style="left:920.0999999999999px;top:534.0px" width="18.5" height="18.5" viewBox="0 0 19 19"><rect width="19" height="19" rx="2" fill="#1c1613"/><path d="M4 7 Q5 2 10 2.5 Q14 3 14 7 L13 6 Q9 4.5 5.5 6Z" fill="#080605"/><path d="M5 6 Q8 4.8 12 6 L12.5 11 Q11.5 15 8.5 15.5 Q6 14 5 10Z" fill="#d6c9bc"/><path d="M6.5 8 L8 8 M10 8 L11.5 8" stroke="#3a2e28" stroke-width="0.9"/><path d="M4 19 Q9 14 17 12 L19 14 L19 19Z" fill="#6d655e"/></svg>
<div class="a num" style="left:996px;top:537.9px">2</div>
<div class="a num" style="left:1019px;top:537.9px">1</div>
<div class="a bar" style="top:537.2px;background:#33dd44"><div class="a" style="left:0;top:0;height:11.5px;width:0%;background:#1b8a1e"></div><span>0%</span></div>
<div class="a rb" style="top:556.0px"></div>
<div class="a dot" style="top:565.8px"></div>
<div class="a par" style="left:210px;top:561.0px">International Geographic Magazine / ...</div>
<div class="a lnk" style="left:210px;top:571.5px">Maintenance</div>
<div class="a tx" style="left:413px;top:566.2px">IG2013.INTRAM</div>
<div class="a tx" style="left:595.5px;top:566.2px">18/05/2015</div>
<div class="a tx" style="left:670px;top:566.2px">14/01/2016</div>
<div class="a num" style="right:493px;top:565.8px">0/0</div>
<div class="a wk" style="right:426px;top:565.2px">42:30</div>
<svg class="a" style="left:854px;top:563.8px" width="16" height="16"><path d="M7.4 4 A4.7 4.7 0 1 0 11.2 9.4" stroke="#222" stroke-width="1.3" fill="none"/><path d="M6.2 6 Q6.8 8.6 8.8 9.4" stroke="#222" stroke-width="1.2" fill="none"/><path d="M10.7 2 V7 M8.2 4.5 H13.2" stroke="#222" stroke-width="1.1"/></svg>
<svg class="a" style="left:876.5px;top:562.5px" width="18.5" height="18.5" viewBox="0 0 19 19"><rect width="19" height="19" rx="2" fill="#eff2dc"/><ellipse cx="11.5" cy="11.2" rx="5" ry="6.6" fill="#f0dcd8"/><path d="M4.8 6 Q4.8 0 11 0 Q18 0 18 5.5 L17.8 12 L16.6 12 L16.4 6.8 Q11 5.6 6.8 6.8 L7 12 Q6.5 17 4 19 L0.5 19 Q4.8 15.5 4.8 10Z" fill="#100e16"/><path d="M7 17.8 Q11.5 19.5 17 17.3 L17 19 L6 19Z" fill="#e2d4d6"/></svg>
<svg class="a" style="left:898.3px;top:562.5px" width="18.5" height="18.5" viewBox="0 0 19 19"><rect width="19" height="19" rx="2" fill="#1c1613"/><path d="M4 7 Q5 2 10 2.5 Q14 3 14 7 L13 6 Q9 4.5 5.5 6Z" fill="#080605"/><path d="M5 6 Q8 4.8 12 6 L12.5 11 Q11.5 15 8.5 15.5 Q6 14 5 10Z" fill="#d6c9bc"/><path d="M6.5 8 L8 8 M10 8 L11.5 8" stroke="#3a2e28" stroke-width="0.9"/><path d="M4 19 Q9 14 17 12 L19 14 L19 19Z" fill="#6d655e"/></svg>
<svg class="a" style="left:920.0999999999999px;top:562.5px" width="18.5" height="18.5" viewBox="0 0 19 19"><rect width="19" height="19" rx="2" fill="#dce9ee"/><path d="M4 1.5 L15 0.8 Q18.2 2.5 18 5 L17.5 7.2 L4 7.2Z" fill="#c4472a"/><path d="M3.5 8.5 L4.5 7 L11 7 L12 14 L10.5 17 L6.5 17 L5.5 13.5 L2.5 11.8Z" fill="#e4925c"/><path d="M9.5 7.2 L15.5 7.2 L15.8 11 L12.5 12.8 L10.5 10Z" fill="#1a1210"/><path d="M5.5 17 L12 16 L15 19 L5 19Z" fill="#c13c20"/></svg>
<div class="a bar" style="top:565.8px;background:#e00514"><div class="a" style="left:0;top:0;height:11.5px;width:80%;background:#7a0505"></div><span>80%</span></div>
<div class="a rb" style="top:586.5px"></div>
<div class="a dot" style="top:595.0px"></div>
<div class="a lnk" style="left:210px;top:595.6px">Mobile App Cristal Palace</div>
<div class="a tx" style="left:595.5px;top:595.5px">25/08/2015</div>
<div class="a tx" style="left:670px;top:595.5px">02/11/2015</div>
<div class="a num" style="right:493px;top:595.0px">1/1</div>
<div class="a wk" style="right:426px;top:594.5px">5:00</div>
<svg class="a" style="left:854px;top:593.0px" width="16" height="16"><path d="M7.4 4 A4.7 4.7 0 1 0 11.2 9.4" stroke="#222" stroke-width="1.3" fill="none"/><path d="M6.2 6 Q6.8 8.6 8.8 9.4" stroke="#222" stroke-width="1.2" fill="none"/><path d="M10.7 2 V7 M8.2 4.5 H13.2" stroke="#222" stroke-width="1.1"/></svg>
<svg class="a" style="left:876.5px;top:591.7px" width="18.5" height="18.5" viewBox="0 0 19 19"><rect width="19" height="19" rx="2" fill="#e6e6e6"/><ellipse cx="9.5" cy="7" rx="3.4" ry="4.2" fill="#c2c2c2"/><path d="M2.5 19 Q2.5 13.5 7 12.5 L12 12.5 Q16.5 13.5 16.5 19Z" fill="#c2c2c2"/></svg>
<svg class="a" style="left:898.3px;top:591.7px" width="18.5" height="18.5" viewBox="0 0 19 19"><rect width="19" height="19" rx="2" fill="#1c1613"/><path d="M4 7 Q5 2 10 2.5 Q14 3 14 7 L13 6 Q9 4.5 5.5 6Z" fill="#080605"/><path d="M5 6 Q8 4.8 12 6 L12.5 11 Q11.5 15 8.5 15.5 Q6 14 5 10Z" fill="#d6c9bc"/><path d="M6.5 8 L8 8 M10 8 L11.5 8" stroke="#3a2e28" stroke-width="0.9"/><path d="M4 19 Q9 14 17 12 L19 14 L19 19Z" fill="#6d655e"/></svg>
<svg class="a" style="left:920.0999999999999px;top:591.7px" width="18.5" height="18.5" viewBox="0 0 19 19"><rect width="19" height="19" rx="2" fill="#eff2dc"/><ellipse cx="11.5" cy="11.2" rx="5" ry="6.6" fill="#f0dcd8"/><path d="M4.8 6 Q4.8 0 11 0 Q18 0 18 5.5 L17.8 12 L16.6 12 L16.4 6.8 Q11 5.6 6.8 6.8 L7 12 Q6.5 17 4 19 L0.5 19 Q4.8 15.5 4.8 10Z" fill="#100e16"/><path d="M7 17.8 Q11.5 19.5 17 17.3 L17 19 L6 19Z" fill="#e2d4d6"/></svg>
<div class="a bar" style="top:595.0px;background:#33dd44"><div class="a" style="left:0;top:0;height:11.5px;width:0%;background:#1b8a1e"></div><span>0%</span></div>
<div class="a rb" style="top:614.5px"></div>
<div class="a dot" style="top:622.5px"></div>
<div class="a lnk" style="left:210px;top:623.1px">Mobile App Crystal Palace Hotel</div>
<div class="a tx" style="left:595.5px;top:623.0px">26/08/2015</div>
<div class="a tx" style="left:670px;top:623.0px">03/11/2015</div>
<div class="a num" style="right:493px;top:622.5px">0/0</div>
<div class="a wk" style="right:426px;top:622.0px">3:00</div>
<svg class="a" style="left:854px;top:620.5px" width="16" height="16"><path d="M7.4 4 A4.7 4.7 0 1 0 11.2 9.4" stroke="#222" stroke-width="1.3" fill="none"/><path d="M6.2 6 Q6.8 8.6 8.8 9.4" stroke="#222" stroke-width="1.2" fill="none"/><path d="M10.7 2 V7 M8.2 4.5 H13.2" stroke="#222" stroke-width="1.1"/></svg>
<svg class="a" style="left:876.5px;top:619.2px" width="18.5" height="18.5" viewBox="0 0 19 19"><rect width="19" height="19" rx="2" fill="#1c1613"/><path d="M4 7 Q5 2 10 2.5 Q14 3 14 7 L13 6 Q9 4.5 5.5 6Z" fill="#080605"/><path d="M5 6 Q8 4.8 12 6 L12.5 11 Q11.5 15 8.5 15.5 Q6 14 5 10Z" fill="#d6c9bc"/><path d="M6.5 8 L8 8 M10 8 L11.5 8" stroke="#3a2e28" stroke-width="0.9"/><path d="M4 19 Q9 14 17 12 L19 14 L19 19Z" fill="#6d655e"/></svg>
<svg class="a" style="left:898.3px;top:619.2px" width="18.5" height="18.5" viewBox="0 0 19 19"><rect width="19" height="19" rx="2" fill="#eff2dc"/><ellipse cx="11.5" cy="11.2" rx="5" ry="6.6" fill="#f0dcd8"/><path d="M4.8 6 Q4.8 0 11 0 Q18 0 18 5.5 L17.8 12 L16.6 12 L16.4 6.8 Q11 5.6 6.8 6.8 L7 12 Q6.5 17 4 19 L0.5 19 Q4.8 15.5 4.8 10Z" fill="#100e16"/><path d="M7 17.8 Q11.5 19.5 17 17.3 L17 19 L6 19Z" fill="#e2d4d6"/></svg>
<div class="a bar" style="top:622.5px;background:#33dd44"><div class="a" style="left:0;top:0;height:11.5px;width:0%;background:#1b8a1e"></div><span>0%</span></div>
<div class="a rb" style="top:641.5px"></div>
<div class="a dot" style="top:649.5px"></div>
<div class="a lnk" style="left:210px;top:650.1px">Mobile app Crystal Palace Hotel</div>
<div class="a tx" style="left:595.5px;top:650.0px">26/08/2015</div>
<div class="a tx" style="left:670px;top:650.0px">03/11/2015</div>
<div class="a num" style="right:493px;top:649.5px">0/0</div>
<div class="a wk" style="right:426px;top:649.0px">4:00</div>
<svg class="a" style="left:854px;top:647.5px" width="16" height="16"><path d="M7.4 4 A4.7 4.7 0 1 0 11.2 9.4" stroke="#222" stroke-width="1.3" fill="none"/><path d="M6.2 6 Q6.8 8.6 8.8 9.4" stroke="#222" stroke-width="1.2" fill="none"/><path d="M10.7 2 V7 M8.2 4.5 H13.2" stroke="#222" stroke-width="1.1"/></svg>
<svg class="a" style="left:876.5px;top:646.2px" width="18.5" height="18.5" viewBox="0 0 19 19"><rect width="19" height="19" rx="2" fill="#1c1613"/><path d="M4 7 Q5 2 10 2.5 Q14 3 14 7 L13 6 Q9 4.5 5.5 6Z" fill="#080605"/><path d="M5 6 Q8 4.8 12 6 L12.5 11 Q11.5 15 8.5 15.5 Q6 14 5 10Z" fill="#d6c9bc"/><path d="M6.5 8 L8 8 M10 8 L11.5 8" stroke="#3a2e28" stroke-width="0.9"/><path d="M4 19 Q9 14 17 12 L19 14 L19 19Z" fill="#6d655e"/></svg>
<svg class="a" style="left:898.3px;top:646.2px" width="18.5" height="18.5" viewBox="0 0 19 19"><rect width="19" height="19" rx="2" fill="#eff2dc"/><ellipse cx="11.5" cy="11.2" rx="5" ry="6.6" fill="#f0dcd8"/><path d="M4.8 6 Q4.8 0 11 0 Q18 0 18 5.5 L17.8 12 L16.6 12 L16.4 6.8 Q11 5.6 6.8 6.8 L7 12 Q6.5 17 4 19 L0.5 19 Q4.8 15.5 4.8 10Z" fill="#100e16"/><path d="M7 17.8 Q11.5 19.5 17 17.3 L17 19 L6 19Z" fill="#e2d4d6"/></svg>
<div class="a bar" style="top:649.5px;background:#33dd44"><div class="a" style="left:0;top:0;height:11.5px;width:0%;background:#1b8a1e"></div><span>0%</span></div>
<div class="a rb" style="top:668.5px"></div>
<div class="a dot" style="top:676.5px"></div>
<div class="a lnk" style="left:210px;top:677.1px">Review presence on social networks</div>
<div class="a tx" style="left:413px;top:677.0px">SOCIAL</div>
<div class="a tx" style="left:595.5px;top:677.0px">03/11/2014</div>
<div class="a tx" style="left:670px;top:677.0px">15/02/2016</div>
<div class="a num" style="right:493px;top:676.5px">1/1</div>
<div class="a wk" style="right:426px;top:676.0px">74:10</div>
<svg class="a" style="left:854px;top:674.5px" width="16" height="16"><path d="M7.4 4 A4.7 4.7 0 1 0 11.2 9.4" stroke="#222" stroke-width="1.3" fill="none"/><path d="M6.2 6 Q6.8 8.6 8.8 9.4" stroke="#222" stroke-width="1.2" fill="none"/><path d="M10.7 2 V7 M8.2 4.5 H13.2" stroke="#222" stroke-width="1.1"/></svg>
<svg class="a" style="left:876.5px;top:673.2px" width="18.5" height="18.5" viewBox="0 0 19 19"><rect width="19" height="19" rx="2" fill="#dce9ee"/><path d="M4 1.5 L15 0.8 Q18.2 2.5 18 5 L17.5 7.2 L4 7.2Z" fill="#c4472a"/><path d="M3.5 8.5 L4.5 7 L11 7 L12 14 L10.5 17 L6.5 17 L5.5 13.5 L2.5 11.8Z" fill="#e4925c"/><path d="M9.5 7.2 L15.5 7.2 L15.8 11 L12.5 12.8 L10.5 10Z" fill="#1a1210"/><path d="M5.5 17 L12 16 L15 19 L5 19Z" fill="#c13c20"/></svg>
<svg class="a" style="left:898.3px;top:673.2px" width="18.5" height="18.5" viewBox="0 0 19 19"><rect width="19" height="19" rx="2" fill="#eff2dc"/><ellipse cx="11.5" cy="11.2" rx="5" ry="6.6" fill="#f0dcd8"/><path d="M4.8 6 Q4.8 0 11 0 Q18 0 18 5.5 L17.8 12 L16.6 12 L16.4 6.8 Q11 5.6 6.8 6.8 L7 12 Q6.5 17 4 19 L0.5 19 Q4.8 15.5 4.8 10Z" fill="#100e16"/><path d="M7 17.8 Q11.5 19.5 17 17.3 L17 19 L6 19Z" fill="#e2d4d6"/></svg>
<svg class="a" style="left:920.0999999999999px;top:673.2px" width="18.5" height="18.5" viewBox="0 0 19 19"><rect width="19" height="19" rx="2" fill="#1c1613"/><path d="M4 7 Q5 2 10 2.5 Q14 3 14 7 L13 6 Q9 4.5 5.5 6Z" fill="#080605"/><path d="M5 6 Q8 4.8 12 6 L12.5 11 Q11.5 15 8.5 15.5 Q6 14 5 10Z" fill="#d6c9bc"/><path d="M6.5 8 L8 8 M10 8 L11.5 8" stroke="#3a2e28" stroke-width="0.9"/><path d="M4 19 Q9 14 17 12 L19 14 L19 19Z" fill="#6d655e"/></svg>
<svg class="a" style="left:941.8999999999999px;top:673.2px" width="18.5" height="18.5" viewBox="0 0 19 19"><rect width="19" height="19" rx="2" fill="#bba999"/><rect y="11.5" width="19" height="7.5" rx="1" fill="#221a17"/><path d="M5 9 Q4 1.5 9.5 1.5 Q15 1.5 14 9 Q13 10.5 12 9 L7 9 Q6 10.5 5 9Z" fill="#1e1714"/><ellipse cx="9.5" cy="8.6" rx="2.6" ry="3.2" fill="#bfae9e"/><path d="M8 12 L9.5 14 L11 12Z" fill="#c4b2a2"/></svg>
<div class="a num" style="left:1019px;top:677.1px">1</div>
<div class="a bar" style="top:676.5px;background:#e00514"><div class="a" style="left:0;top:0;height:11.5px;width:59%;background:#7a0505"></div><span>59%</span></div>
<div class="a rb" style="top:695.5px"></div>
<div class="a" style="left:154px;top:696px;width:970px;height:27px;background:rgba(222,238,180,.55)"></div>
<div class="a dot" style="top:703.5px"></div>
<div class="a lnk" style="left:210px;top:704.1px">Security refresher course 2015</div>
<div class="a tx" style="left:595.5px;top:704.0px">20/01/2015</div>
<div class="a" style="left:670px;top:704.8px;width:10px;height:10px;border-radius:50%;background:#cc1122;color:#fff;font-size:8px;font-weight:bold;line-height:10px;text-align:center">!</div>
<div class="a tx" style="left:681px;top:704.0px;color:#c8102a">02/04/2015</div>
<div class="a num" style="right:493px;top:703.5px">0/0</div>
<div class="a wk" style="right:426px;top:703.0px">5:00</div>
<svg class="a" style="left:854px;top:701.5px" width="16" height="16"><path d="M7.4 4 A4.7 4.7 0 1 0 11.2 9.4" stroke="#222" stroke-width="1.3" fill="none"/><path d="M6.2 6 Q6.8 8.6 8.8 9.4" stroke="#222" stroke-width="1.2" fill="none"/><path d="M10.7 2 V7 M8.2 4.5 H13.2" stroke="#222" stroke-width="1.1"/></svg>
<svg class="a" style="left:876.5px;top:700.2px" width="18.5" height="18.5" viewBox="0 0 19 19"><rect width="19" height="19" rx="2" fill="#dce9ee"/><path d="M4 1.5 L15 0.8 Q18.2 2.5 18 5 L17.5 7.2 L4 7.2Z" fill="#c4472a"/><path d="M3.5 8.5 L4.5 7 L11 7 L12 14 L10.5 17 L6.5 17 L5.5 13.5 L2.5 11.8Z" fill="#e4925c"/><path d="M9.5 7.2 L15.5 7.2 L15.8 11 L12.5 12.8 L10.5 10Z" fill="#1a1210"/><path d="M5.5 17 L12 16 L15 19 L5 19Z" fill="#c13c20"/></svg>
<svg class="a" style="left:898.3px;top:700.2px" width="18.5" height="18.5" viewBox="0 0 19 19"><rect width="19" height="19" rx="2" fill="#eff2dc"/><ellipse cx="11.5" cy="11.2" rx="5" ry="6.6" fill="#f0dcd8"/><path d="M4.8 6 Q4.8 0 11 0 Q18 0 18 5.5 L17.8 12 L16.6 12 L16.4 6.8 Q11 5.6 6.8 6.8 L7 12 Q6.5 17 4 19 L0.5 19 Q4.8 15.5 4.8 10Z" fill="#100e16"/><path d="M7 17.8 Q11.5 19.5 17 17.3 L17 19 L6 19Z" fill="#e2d4d6"/></svg>
<svg class="a" style="left:920.0999999999999px;top:700.2px" width="18.5" height="18.5" viewBox="0 0 19 19"><rect width="19" height="19" rx="2" fill="#1c1613"/><path d="M4 7 Q5 2 10 2.5 Q14 3 14 7 L13 6 Q9 4.5 5.5 6Z" fill="#080605"/><path d="M5 6 Q8 4.8 12 6 L12.5 11 Q11.5 15 8.5 15.5 Q6 14 5 10Z" fill="#d6c9bc"/><path d="M6.5 8 L8 8 M10 8 L11.5 8" stroke="#3a2e28" stroke-width="0.9"/><path d="M4 19 Q9 14 17 12 L19 14 L19 19Z" fill="#6d655e"/></svg>
<div class="a num" style="left:1019px;top:704.1px">6</div>
<div class="a bar" style="top:703.5px;background:#e00514"><div class="a" style="left:0;top:0;height:11.5px;width:100%;background:#7a0505"></div><span>100%</span></div>
<div class="a" style="left:1100px;top:0;width:180px;height:180px;background:linear-gradient(180deg,#eb8087 0,#e96470 50%,#e84a57 100%);clip-path:polygon(20px 0,82.5px 0,180px 97.5px,180px 160px)"></div>
<div class="a" style="left:1214.5px;top:61.8px;width:0;height:0"><div class="a" style="left:-90.7px;top:-12px;width:181.4px;height:24px;font-size:25.5px;line-height:24px;font-weight:bold;color:#fff;text-align:center;transform-origin:50% 50%;transform:rotate(45deg) scaleX(0.63)">NEW VERSION</div></div>
</body></html>
